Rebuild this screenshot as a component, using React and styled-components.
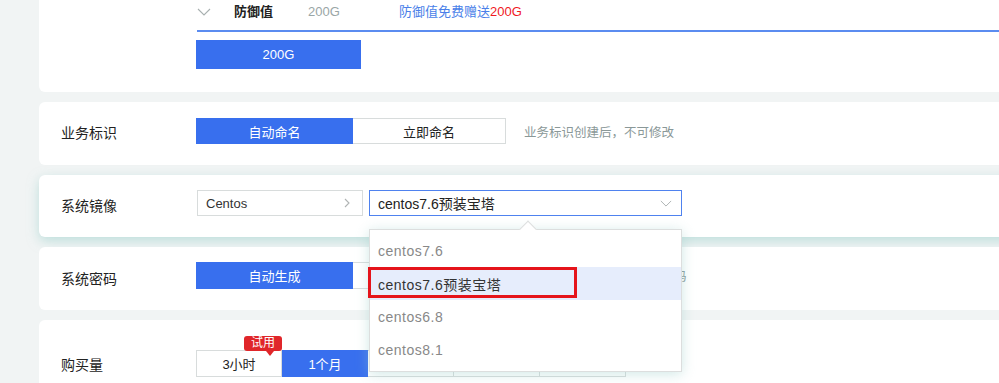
import React from "react";
import styled, { createGlobalStyle } from "styled-components";

const GlobalStyle = createGlobalStyle`
  html, body {
    margin: 0;
    padding: 0;
    background: #f1f4f4;
    overflow: hidden;
  }
  body {
    font-family: "Liberation Sans", "Noto Sans CJK SC", sans-serif;
    color: #222;
  }
`;

const Page = styled.div`
  margin-top: -10px;
  padding-left: 39px;
  display: flex;
  flex-direction: column;
  gap: 10px;
`;

const Card = styled.div`
  background: #fff;
  border-radius: 6px;
  margin-right: -20px;
  display: flex;
  align-items: ${(p) => (p.$top ? "flex-start" : "center")};
  padding: ${(p) => p.$pad || "16px 0 21px 22px"};
  box-shadow: ${(p) =>
    p.$active ? "0 4px 12px rgba(150, 205, 200, 0.55)" : "none"};
`;

const Label = styled.div`
  width: 135px;
  flex-shrink: 0;
  font-size: 14px;
  line-height: 20px;
  padding-top: ${(p) => p.$drop || "4px"};
  color: #222;
`;

const Body = styled.div`
  flex: 1;
  display: flex;
  flex-direction: column;
`;

const TabRow = styled.div`
  display: flex;
  align-items: center;
  height: 30px;
  border-bottom: 2px solid #5b8cf0;
  margin-left: 1px;
`;

const TabCell = styled.div`
  width: ${(p) => p.$w}px;
  flex-shrink: 0;
  font-size: 13px;
  line-height: 24px;
  padding-bottom: 6px;
  display: flex;
  align-items: center;
  color: ${(p) => p.$color || "#222"};
  font-weight: ${(p) => (p.$bold ? 700 : 400)};
`;

const Red = styled.span`
  color: #f0191f;
`;

const Options = styled.div`
  display: flex;
  margin-top: 8px;
`;

const Segment = styled.div`
  display: flex;
  align-items: center;
`;

const SegBtn = styled.div`
  position: relative;
  box-sizing: border-box;
  width: ${(p) => p.$w}px;
  height: ${(p) => p.$h || 26}px;
  display: flex;
  align-items: center;
  justify-content: center;
  font-size: 13px;
  background: ${(p) => (p.$on ? "#386fee" : "#fff")};
  color: ${(p) => (p.$on ? "#fff" : "#222")};
  border: 1px solid ${(p) => (p.$on ? "#386fee" : "#d8dcdc")};
  border-left-width: ${(p) => (p.$first || p.$on ? 1 : 0)}px;
`;

const Hint = styled.div`
  margin-left: 18px;
  font-size: 12.5px;
  color: #8a9898;
  white-space: nowrap;
`;

const Badge = styled.div`
  position: absolute;
  left: 47px;
  top: -15px;
  width: 38px;
  height: 15px;
  border-radius: 3px;
  background: #e0262a;
  color: #fff;
  font-size: 12px;
  line-height: 15px;
  text-align: center;
  &::after {
    content: "";
    position: absolute;
    right: 8px;
    bottom: -5px;
    border-left: 4px solid transparent;
    border-right: 4px solid transparent;
    border-top: 5px solid #e0262a;
  }
`;

const Cascader = styled.div`
  box-sizing: border-box;
  width: 166px;
  height: 26px;
  margin-left: 1px;
  border: 1px solid #d8dcdc;
  display: flex;
  align-items: center;
  justify-content: space-between;
  padding: 0 12px 0 8px;
  font-size: 13px;
  color: #333;
`;

const SelectWrap = styled.div`
  position: relative;
  z-index: 10;
  margin-left: 6px;
`;

const Select = styled.div`
  box-sizing: border-box;
  width: 313px;
  height: 26px;
  border: 1px solid #4f82ef;
  display: flex;
  align-items: center;
  justify-content: space-between;
  padding: 0 9px 0 8px;
  font-size: 14px;
  color: #222;
`;

const Dropdown = styled.div`
  position: absolute;
  left: 0;
  top: calc(100% + 13px);
  box-sizing: border-box;
  width: 313px;
  padding: 4px 0 5px;
  background: #fff;
  border: 1px solid #dcdede;
  box-shadow: 0 2px 12px rgba(150, 205, 200, 0.45);
  &::before {
    content: "";
    position: absolute;
    left: 152px;
    top: -7px;
    width: 11px;
    height: 11px;
    background: #fff;
    border-left: 1px solid #dcdede;
    border-top: 1px solid #dcdede;
    transform: rotate(45deg);
  }
`;

const Item = styled.div`
  position: relative;
  height: 33px;
  display: flex;
  align-items: center;
  padding-left: 8px;
  font-size: 14px;
  letter-spacing: 0.5px;
  color: ${(p) => (p.$on ? "#333" : "#888")};
  background: ${(p) => (p.$on ? "#e6edfc" : "#fff")};
`;

const Mark = styled.div`
  position: absolute;
  left: -2px;
  top: 0;
  box-sizing: border-box;
  width: 209px;
  height: 31px;
  border: 3px solid #e5141b;
`;

const Down = ({ w = 14, h = 8, color = "#a8b0b0" }) => (
  <svg width={w} height={h} viewBox="0 0 14 8">
    <polyline points="1,1 7,7 13,1" fill="none" stroke={color} strokeWidth="1.1" />
  </svg>
);

const Right = () => (
  <svg width="6" height="10" viewBox="0 0 6 10">
    <polyline points="1,1 5,5 1,9" fill="none" stroke="#b0b4b4" strokeWidth="1.1" />
  </svg>
);

const images = ["centos7.6", "centos7.6预装宝塔", "centos6.8", "centos8.1"];

export default function App() {
  return (
    <>
      <GlobalStyle />
      <Page>
        <Card $top $pad="10px 0 23px 22px">
          <Label $drop="0px">{""}</Label>
          <Body>
            <TabRow>
              <TabCell $w={37}>
                <Down />
              </TabCell>
              <TabCell $w={74} $bold>
                防御值
              </TabCell>
              <TabCell $w={91} $color="#9aa6a6">
                200G
              </TabCell>
              <TabCell $w={200} $color="#4a7fe9">
                防御值免费赠送<Red>200G</Red>
              </TabCell>
            </TabRow>
            <Options>
              <SegBtn $w={165} $h={29} $on $first>
                200G
              </SegBtn>
            </Options>
          </Body>
        </Card>

        <Card>
          <Label>业务标识</Label>
          <Segment>
            <SegBtn $w={157} $on $first>
              自动命名
            </SegBtn>
            <SegBtn $w={153}>立即命名</SegBtn>
          </Segment>
          <Hint>业务标识创建后，不可修改</Hint>
        </Card>

        <Card $active $pad="15px 0 21px 22px">
          <Label $drop="6px">系统镜像</Label>
          <Cascader>
            Centos
            <Right />
          </Cascader>
          <SelectWrap>
            <Select>
              centos7.6预装宝塔
              <Down w={12} h={7} color="#aab0b0" />
            </Select>
            <Dropdown>
              {images.map((name, i) => (
                <Item key={name} $on={i === 1}>
                  {name}
                  {i === 1 && <Mark />}
                </Item>
              ))}
            </Dropdown>
          </SelectWrap>
        </Card>

        <Card $pad="15px 0 21px 22px">
          <Label $drop="6px">系统密码</Label>
          <Segment>
            <SegBtn $w={157} $h={27} $on $first>
              自动生成
            </SegBtn>
            <SegBtn $w={153} $h={27}>
              自定义密码
            </SegBtn>
          </Segment>
          <Hint>系统将自动生成随机登录密码</Hint>
        </Card>

        <Card $pad="30px 0 21px 22px">
          <Label $drop="2px">购买量</Label>
          <Segment>
            <SegBtn $w={86} $h={27} $first>
              3小时
              <Badge>试用</Badge>
            </SegBtn>
            <SegBtn $w={86} $h={27} $on>
              1个月
            </SegBtn>
            <SegBtn $w={86} $h={27}>
              3个月
            </SegBtn>
            <SegBtn $w={86} $h={27}>
              6个月
            </SegBtn>
            <SegBtn $w={86} $h={27}>
              1年
            </SegBtn>
          </Segment>
        </Card>
      </Page>
    </>
  );
}
